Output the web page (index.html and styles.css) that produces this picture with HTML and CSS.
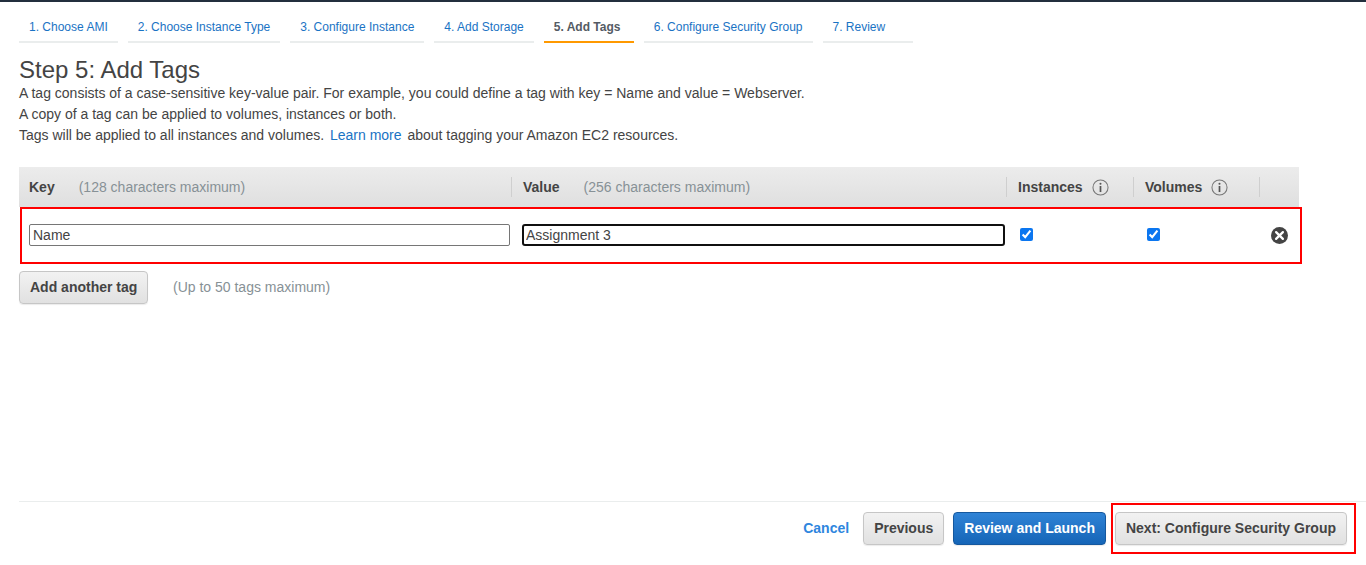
FILE: index.html
```html
<!DOCTYPE html>
<html lang="en">
<head>
    <meta charset="UTF-8">
    <meta name="viewport" content="width=device-width, initial-scale=1.0">
    <title>Step 5: Add Tags</title>
    <link rel="stylesheet" href="styles.css">
</head>
<body>
    <nav class="tabs">
        <a class="tab" href="#">1. Choose AMI</a>
        <a class="tab" href="#">2. Choose Instance Type</a>
        <a class="tab" href="#">3. Configure Instance</a>
        <a class="tab" href="#">4. Add Storage</a>
        <a class="tab active" href="#">5. Add Tags</a>
        <a class="tab" href="#">6. Configure Security Group</a>
        <a class="tab" href="#">7. Review</a>
    </nav>

    <h1>Step 5: Add Tags</h1>
    <div class="intro">
        <p>A tag consists of a case-sensitive key-value pair. For example, you could define a tag with key = Name and value = Webserver.</p>
        <p>A copy of a tag can be applied to volumes, instances or both.</p>
        <p>Tags will be applied to all instances and volumes. <a class="learn" href="#">Learn more</a> about tagging your Amazon EC2 resources.</p>
    </div>

    <div class="tag-table">
        <div class="tag-grid tag-head">
            <div class="head-cell"><b>Key</b><span class="limit">(128 characters maximum)</span></div>
            <div class="head-cell divided"><b>Value</b><span class="limit">(256 characters maximum)</span></div>
            <div class="head-cell divided">
                <b>Instances</b>
                <svg class="info" viewBox="0 0 18 18"><circle cx="9" cy="9" r="8" fill="none" stroke="#777" stroke-width="1.1"/><circle cx="9" cy="5" r="1.1" fill="#555"/><rect x="8.1" y="7.4" width="1.8" height="6.4" fill="#555"/></svg>
            </div>
            <div class="head-cell divided">
                <b>Volumes</b>
                <svg class="info" viewBox="0 0 18 18"><circle cx="9" cy="9" r="8" fill="none" stroke="#777" stroke-width="1.1"/><circle cx="9" cy="5" r="1.1" fill="#555"/><rect x="8.1" y="7.4" width="1.8" height="6.4" fill="#555"/></svg>
            </div>
            <div class="head-cell divided"></div>
        </div>
        <div class="tag-grid tag-row">
            <div class="row-cell text-cell"><input class="text-input" type="text" value="Name"></div>
            <div class="row-cell text-cell"><input class="text-input focused" type="text" value="Assignment 3"></div>
            <div class="row-cell"><input class="check" type="checkbox" checked></div>
            <div class="row-cell"><input class="check" type="checkbox" checked></div>
            <div class="row-cell">
                <svg class="remove" viewBox="0 0 18 18"><circle cx="9" cy="9" r="9" fill="#444"/><path d="M5.4 5.4l7.2 7.2M12.6 5.4l-7.2 7.2" stroke="#fff" stroke-width="2.4" stroke-linecap="round"/></svg>
            </div>
            <div class="marker row-marker"></div>
        </div>
    </div>

    <div class="add-row">
        <button class="btn add-btn">Add another tag</button>
        <span class="limit">(Up to 50 tags maximum)</span>
    </div>

    <footer class="footer">
        <a class="cancel" href="#">Cancel</a>
        <button class="btn">Previous</button>
        <button class="btn primary">Review and Launch</button>
        <div class="next-wrap">
            <button class="btn">Next: Configure Security Group</button>
            <div class="marker next-marker"></div>
        </div>
    </footer>
</body>
</html>
```

FILE: styles.css
```css
html, body {
    height: 565px;
}
body {
    font-family: 'Liberation Sans', Arial, sans-serif;
    font-size: 14px;
    color: #444;
    background-color: #fff;
    margin: 0;
    padding: 0 0 0 19px;
    border-top: 2px solid #232f3e;
    box-sizing: border-box;
    display: flex;
    flex-direction: column;
    overflow: hidden;
}
a {
    color: #1a73c4;
    text-decoration: none;
}
.tabs {
    display: flex;
    gap: 10px;
    margin-top: 18px;
}
.tab {
    font-size: 12px;
    line-height: 14px;
    min-width: 90px;
    box-sizing: border-box;
    padding: 0 10px 7px;
    border-bottom: 2px solid #eaeded;
}
.tab.active {
    color: #545b64;
    font-weight: bold;
    border-bottom-color: #ff9900;
}
h1 {
    font-size: 24px;
    font-weight: normal;
    line-height: 26px;
    margin: 14px 0 0;
}
.intro p {
    margin: 0;
    line-height: 21px;
}
.learn {
    margin: 0 2px;
}
.tag-table {
    margin-top: 21px;
    width: 1280px;
}
.tag-grid {
    display: grid;
    grid-template-columns: 493px 495px 127px 126px 39px;
}
.tag-head {
    height: 40px;
    align-items: center;
    background: linear-gradient(#ececec, #dfdfdf);
}
.head-cell {
    display: flex;
    align-items: center;
    height: 20px;
    padding-left: 10px;
    box-sizing: border-box;
}
.head-cell.divided {
    margin-left: -1px;
    padding-left: 11px;
    border-left: 1px solid #cfcfcf;
}
.limit {
    color: #879196;
}
.head-cell .limit {
    margin-left: 24px;
}
.info {
    width: 17px;
    height: 17px;
    margin-left: 9px;
}
.tag-row {
    position: relative;
    height: 57px;
    box-sizing: border-box;
    padding-top: 17px;
    align-items: start;
}
.row-cell {
    display: flex;
    align-items: center;
    height: 22px;
    padding-left: 10px;
}
.text-cell {
    padding-right: 2px;
}
.text-input {
    font-family: inherit;
    font-size: 14px;
    color: #444;
    width: 100%;
    height: 22px;
    margin: 0;
    padding: 1px 3px;
    border: 1px solid #767676;
    border-radius: 2px;
    box-sizing: border-box;
    outline: none;
}
.text-input.focused {
    border: 2px solid #101010;
    border-radius: 3px;
    padding: 0 2px;
}
.check {
    width: 13px;
    height: 13px;
    margin: 0 0 2px 3px;
    accent-color: #0b76f0;
}
.remove {
    width: 17px;
    height: 17px;
    margin: 1px 0 0 1px;
}
.marker {
    position: absolute;
    border: 2px solid #f00;
    box-sizing: border-box;
}
.row-marker {
    left: 1px;
    top: 0;
    width: 1282px;
    height: 57px;
}
.add-row {
    display: flex;
    align-items: center;
    gap: 25px;
    margin-top: 7px;
}
.add-row .limit {
    margin-bottom: 2px;
}
.btn {
    font-family: inherit;
    font-size: 14px;
    font-weight: bold;
    color: #444;
    height: 33px;
    padding: 0 10px 2px;
    border: 1px solid #c6c6c6;
    border-radius: 4px;
    background: linear-gradient(#f2f2f2, #e1e1e1);
    box-shadow: 0 1px 1px rgba(0, 0, 0, 0.08);
}
.btn.primary {
    color: #fff;
    border-color: #15589e;
    background: linear-gradient(#2f83d6, #1565b7);
}
.add-btn {
    width: 129px;
    white-space: nowrap;
}
.footer {
    display: flex;
    align-items: flex-start;
    justify-content: flex-end;
    height: 64px;
    margin-top: auto;
    padding: 10px 19px 0 0;
    border-top: 1px solid #eaeded;
    gap: 9px;
    box-sizing: border-box;
}
.cancel {
    color: #2e86de;
    font-weight: bold;
    line-height: 33px;
    margin-right: 5px;
}
.next-wrap {
    position: relative;
}
.next-marker {
    left: -4px;
    top: -9px;
    width: 245px;
    height: 51px;
}
```
